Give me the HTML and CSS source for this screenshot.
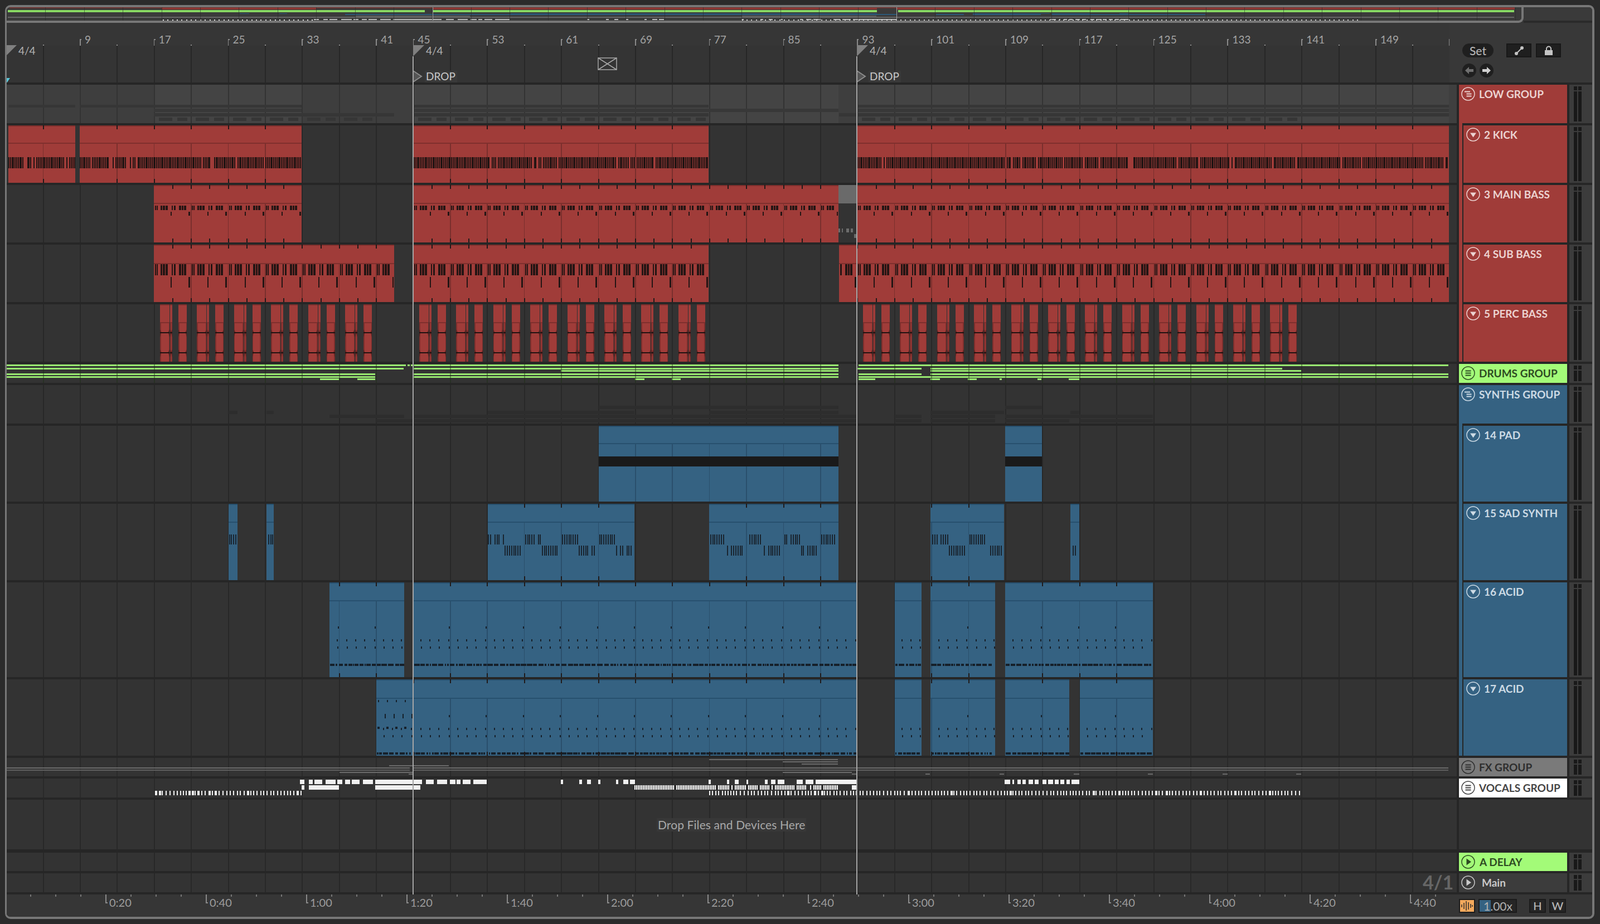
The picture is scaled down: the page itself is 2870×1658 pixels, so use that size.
FILE: index.html
```html
<!DOCTYPE html>
<html lang="en">
<head>
<meta charset="utf-8">
<title>Arrangement</title>
<link rel="stylesheet" href="styles.css">
</head>
<body>
<svg class="defs" width="0" height="0">
  <symbol id="i-fold" viewBox="0 0 25 25"><circle cx="12.5" cy="12.5" r="11.5" fill="none" stroke="currentColor" stroke-width="1.5"/><path d="M6 8.5h10M9.5 12.5h9M9.5 16.5h9" stroke="currentColor" stroke-width="1.8" fill="none"/></symbol>
  <symbol id="i-group" viewBox="0 0 25 25"><circle cx="12.5" cy="12.5" r="11.5" fill="none" stroke="currentColor" stroke-width="1.5"/><path d="M7.5 8.5h10M7.5 12.5h10M7.5 16.5h10" stroke="currentColor" stroke-width="1.8" fill="none"/></symbol>
  <symbol id="i-down" viewBox="0 0 25 25"><circle cx="12.5" cy="12.5" r="11.5" fill="none" stroke="currentColor" stroke-width="1.5"/><path d="M7 9.5h11l-5.5 8z" fill="currentColor"/></symbol>
  <symbol id="i-play" viewBox="0 0 25 25"><circle cx="12.5" cy="12.5" r="11.5" fill="none" stroke="currentColor" stroke-width="1.5"/><path d="M9.5 6.5l8.5 6-8.5 6z" fill="currentColor"/></symbol>
</svg>

<main class="frame">
  <section class="overview-bar">
    <div class="overview"><svg id="overview" class="lane" viewBox="12 13 2717 24" preserveAspectRatio="none"></svg></div>
    <div class="overview-rest"></div>
  </section>

  <section class="arr">
    <div class="topbar">
      <svg id="ruler" class="lane ruler" viewBox="12 41 2588 107"></svg>
      <div class="panel">
        <div class="panel-row">
          <div class="pill">Set</div>
          <div class="sq sq-a">
            <svg width="20" height="20" viewBox="0 0 20 20"><path d="M4 16L16 4" stroke="#c4c4c4" stroke-width="2"/><circle cx="5" cy="15" r="3" fill="#c4c4c4"/><circle cx="15" cy="5" r="3" fill="#c4c4c4"/></svg>
          </div>
          <div class="sq sq-b">
            <svg width="20" height="20" viewBox="0 0 20 20"><path d="M6 9V6.5a4 4 0 0 1 8 0V9" stroke="#c4c4c4" stroke-width="2" fill="none"/><rect x="3" y="9" width="14" height="9" fill="#c4c4c4"/></svg>
          </div>
        </div>
        <div class="panel-row nav">
          <div class="round"><svg width="17" height="17" viewBox="0 0 17 17"><path d="M1 8.5L8 2v4h8v5H8v4z" fill="#707070"/></svg></div>
          <div class="round"><svg width="17" height="17" viewBox="0 0 17 17"><path d="M16 8.5L9 2v4H1v5h8v4z" fill="#cfcfcf"/></svg></div>
        </div>
      </div>
    </div>

    <div class="tracks">
      <div class="row h69 lighter">
        <svg id="low" class="lane" viewBox="12 152 2588 69"></svg><div class="gutter"></div>
        <div class="head red"><svg class="ico"><use href="#i-fold"/></svg><span>LOW GROUP</span></div>
        <div class="meter"><i></i><i></i></div>
      </div>
      <div class="row h103">
        <svg id="kick" class="lane" viewBox="12 225 2588 103"></svg><div class="gutter"></div>
        <div class="head child red-strip"><div class="inner red"><svg class="ico"><use href="#i-down"/></svg><span>2 KICK</span></div></div>
        <div class="meter"><i></i><i></i></div>
      </div>
      <div class="row h103">
        <svg id="mainbass" class="lane" viewBox="12 332 2588 103"></svg><div class="gutter"></div>
        <div class="head child red-strip"><div class="inner red"><svg class="ico"><use href="#i-down"/></svg><span>3 MAIN BASS</span></div></div>
        <div class="meter"><i></i><i></i></div>
      </div>
      <div class="row h103">
        <svg id="subbass" class="lane" viewBox="12 439 2588 103"></svg><div class="gutter"></div>
        <div class="head child red-strip"><div class="inner red"><svg class="ico"><use href="#i-down"/></svg><span>4 SUB BASS</span></div></div>
        <div class="meter"><i></i><i></i></div>
      </div>
      <div class="row h103">
        <svg id="perc" class="lane" viewBox="12 546 2588 103"></svg><div class="gutter"></div>
        <div class="head child red-strip"><div class="inner red"><svg class="ico"><use href="#i-down"/></svg><span>5 PERC BASS</span></div></div>
        <div class="meter"><i></i><i></i></div>
      </div>
      <div class="row h34">
        <svg id="drums" class="lane" viewBox="12 653 2588 34"></svg><div class="gutter"></div>
        <div class="head green"><svg class="ico"><use href="#i-group"/></svg><span>DRUMS GROUP</span></div>
        <div class="meter"><i></i><i></i></div>
      </div>
      <div class="row h69">
        <svg id="synths" class="lane" viewBox="12 691 2588 69"></svg><div class="gutter"></div>
        <div class="head blue"><svg class="ico"><use href="#i-fold"/></svg><span>SYNTHS GROUP</span></div>
        <div class="meter"><i></i><i></i></div>
      </div>
      <div class="row h136">
        <svg id="pad" class="lane" viewBox="12 764 2588 136"></svg><div class="gutter"></div>
        <div class="head child blue-strip"><div class="inner blue"><svg class="ico"><use href="#i-down"/></svg><span>14 PAD</span></div></div>
        <div class="meter"><i></i><i></i></div>
      </div>
      <div class="row h137">
        <svg id="sad" class="lane" viewBox="12 904 2588 137"></svg><div class="gutter"></div>
        <div class="head child blue-strip"><div class="inner blue"><svg class="ico"><use href="#i-down"/></svg><span>15 SAD SYNTH</span></div></div>
        <div class="meter"><i></i><i></i></div>
      </div>
      <div class="row h170">
        <svg id="acid16" class="lane" viewBox="12 1045 2588 170"></svg><div class="gutter"></div>
        <div class="head child blue-strip"><div class="inner blue"><svg class="ico"><use href="#i-down"/></svg><span>16 ACID</span></div></div>
        <div class="meter"><i></i><i></i></div>
      </div>
      <div class="row h137">
        <svg id="acid17" class="lane" viewBox="12 1219 2588 137"></svg><div class="gutter"></div>
        <div class="head child blue-strip"><div class="inner blue"><svg class="ico"><use href="#i-down"/></svg><span>17 ACID</span></div></div>
        <div class="meter"><i></i><i></i></div>
      </div>
      <div class="row h33">
        <svg id="fx" class="lane" viewBox="12 1360 2588 33"></svg><div class="gutter"></div>
        <div class="head grey"><svg class="ico"><use href="#i-group"/></svg><span>FX GROUP</span></div>
        <div class="meter"><i></i><i></i></div>
      </div>
      <div class="row h34">
        <svg id="vocals" class="lane" viewBox="12 1397 2588 34"></svg><div class="gutter"></div>
        <div class="head white"><svg class="ico"><use href="#i-group"/></svg><span>VOCALS GROUP</span></div>
        <div class="meter"><i></i><i></i></div>
      </div>
      <div class="row h89 drop-row">
        <svg id="empty" class="lane" viewBox="12 1435 2588 89"></svg>
        <div class="drop">Drop Files and Devices Here</div>
        <div class="gutter"></div>
        <div class="head none"></div>
        <div class="meter none"></div>
      </div>
      <div class="row h33 after-drop">
        <svg id="delay" class="lane" viewBox="12 1530 2588 33"></svg><div class="gutter"></div>
        <div class="head green ret"><svg class="ico"><use href="#i-play"/></svg><span>A DELAY</span></div>
        <div class="meter"><i></i><i></i></div>
      </div>
      <div class="row h34">
        <svg id="mainlane" class="lane" viewBox="12 1567 2588 34"></svg><div class="gutter"></div>
        <div class="grid-label">4/1</div>
        <div class="head main-head"><svg class="ico"><use href="#i-play"/></svg><span>Main</span></div>
        <div class="meter"><i></i><i></i></div>
      </div>
    </div>
    <div class="loc loc-a"></div>
    <div class="loc loc-b"></div>
  </section>

  <section class="foot">
    <svg id="time" class="lane ruler" viewBox="12 1605 2588 40"></svg>
    <div class="foot-ctrl">
      <div class="orange">
        <svg width="25" height="21" viewBox="0 0 25 21"><path d="M3 8v5M7 5v11M11 2v17M15 4v13M19 7v7M22 9v3" stroke="#2a2a2a" stroke-width="1.5"/></svg>
      </div>
      <div class="rate"><b></b><span>1.00x</span></div>
      <div class="key key-h">H</div>
      <div class="key key-w">W</div>
    </div>
  </section>
</main>
<script src="app.js"></script>
</body>
</html>
```

FILE: styles.css
```css
* { box-sizing: border-box; }
html, body { margin: 0; padding: 0; }
body {
  width: 2870px;
  height: 1658px;
  overflow: hidden;
  background: #2b2b2b;
  padding: 9px 10px 9px 9px;
  font-family: "Lato", "Liberation Sans", sans-serif;
}
.defs { position: absolute; }
.frame {
  width: 2851px;
  height: 1640px;
  border: solid #777;
  border-width: 4px 4px 4px 3px;
  border-radius: 10px;
  background: #363636;
  display: flex;
  flex-direction: column;
  overflow: hidden;
}
.lane { display: block; flex: none; width: 2588px; height: 100%; shape-rendering: crispEdges; }
.lane text { shape-rendering: auto; font-family: "Lato", "Liberation Sans", sans-serif; }

.overview-bar { display: flex; height: 28px; flex: none; }
.overview {
  width: 2721px;
  height: 28px;
  border: solid #777;
  border-width: 0 4px 4px 0;
  border-radius: 0 0 9px 0;
  background: #3a3a3a;
  overflow: hidden;
}
.overview .lane { width: 2717px; }
.overview-rest { flex: 1; background: #3a3a3a; border-bottom: 4px solid #2a2a2a; }

.arr { position: relative; flex: none; }
.topbar { display: flex; height: 107px; background: #383838; }
.ruler { background: #363636; }
.panel { flex: 1; padding: 37px 0 0 23px; }
.panel-row { display: flex; align-items: center; }
.nav { margin-top: 11px; gap: 6px; }
.pill {
  width: 56px; height: 25px; border-radius: 13px; background: #1f1f1f;
  color: #b6b6b6; font-size: 21px; font-weight: 500; line-height: 25px; text-align: center;
}
.sq {
  width: 45px; height: 25px; background: #1f1f1f; border: 2px solid #181818;
  display: flex; align-items: center; justify-content: center;
}
.sq-a { margin-left: 23px; }
.sq-b { margin-left: 8px; }
.round {
  width: 25px; height: 25px; border-radius: 50%; background: #1f1f1f;
  display: flex; align-items: center; justify-content: center;
}

.tracks {
  border-top: 4px solid #262626;
  background: #262626;
  display: flex;
  flex-direction: column;
  gap: 4px;
  padding-bottom: 4px;
}
.row { display: flex; position: relative; flex: none; }
.h33 { height: 33px; }
.h34 { height: 34px; }
.h69 { height: 69px; }
.h89 { height: 89px; }
.h103 { height: 103px; }
.h136 { height: 136px; }
.h137 { height: 137px; }
.h170 { height: 170px; }
.after-drop { margin-top: 2px; }
.gutter { width: 13px; margin-right: 4px; background: #333; flex: none; }
.lighter .gutter { background: #3f3f3f; }

.head {
  width: 194px; margin-right: 4px; flex: none;
  display: flex; align-items: flex-start; gap: 7px;
  padding: 4px 0 0 4px;
  font-size: 19px; font-weight: 700; line-height: 25px; white-space: nowrap;
  position: relative;
}
.head.child { display: block; padding: 0 0 0 8px; }
.head.child::before { content: ""; position: absolute; left: 0; top: -4px; bottom: 0; width: 6px; }
.red-strip::before { background: #a03c39; }
.blue-strip::before { background: #356282; }
.inner { height: 100%; display: flex; align-items: flex-start; gap: 7px; padding: 4px 0 0 5px; }
.ico { width: 25px; height: 25px; flex: none; }
.red { background: #a03c39; color: #ecd3d1; }
.blue { background: #356282; color: #cddbe5; }
.green { background: #a3fb78; color: #2d4a22; }
.grey { background: #7a7a7a; color: #2e2e2e; }
.white { background: #fff; color: #454545; }
.main-head { background: #3c3c3c; color: #c9c9c9; }
.ret span { margin-left: 1px; }
.main-head span { margin-left: 5px; }
.head.none { background: #333; margin-right: 0; width: 198px; }

.meter {
  width: 41px; flex: none; background: #3c3c3c;
  display: flex; gap: 2px; padding: 3px 0 3px 8px;
}
.meter.none { background: #333; }
.meter i {
  display: block; width: 6px; height: 100%;
  background: linear-gradient(#191919 0, #191919 7px, #3c3c3c 7px, #3c3c3c 9px, #191919 9px);
}

.loc { position: absolute; top: 60px; bottom: 0; width: 2px; background: #a6a6a6; }
.loc-a { left: 728px; }
.loc-b { left: 1524px; }

.drop-row .drop {
  position: absolute; left: 1166px; top: 33px; padding: 0 2px;
  color: #a8a8a8; font-size: 21px; letter-spacing: 0.1px; line-height: 24px; background: #383838;
}
.grid-label {
  position: absolute; left: 2540px; top: 0;
  color: #666; font-size: 34px; font-weight: 700; line-height: 32px;
}

.foot { display: flex; flex: 1; background: #363636; }
.foot .lane { height: 40px; }
.foot-ctrl { flex: 1; display: flex; align-items: flex-start; padding: 8px 0 0 17px; }
.orange {
  width: 29px; height: 25px; background: #f4a95c; border: 2px solid #1c1c1c;
  display: flex; align-items: center; justify-content: center;
}
.rate {
  width: 69px; height: 25px; margin-left: 6px; background: #262626; border: 2px solid #1c1c1c;
  position: relative; color: #b0b0b0; font-size: 21px; line-height: 21px; padding-left: 7px;
}
.rate b { position: absolute; left: 0; top: 0; bottom: 0; width: 20px; background: #356282; }
.rate span { position: relative; }
.key {
  width: 30px; height: 25px; background: #262626; border: 2px solid #1c1c1c;
  color: #b8b8b8; font-size: 20px; line-height: 21px; text-align: center; font-weight: 500;
}
.key-h { margin-left: 22px; }
.key-w { margin-left: 6px; }
```

FILE: app.js
```js
(function () {
  var X0 = 10.2, K = 16.6, P = 66.4;
  var GRID = [];
  for (var b = 1; b <= 157; b += 4) GRID.push(X0 + (b - 1) * K);

  function rnd(seed) {
    var s = seed;
    return function () {
      s = (s * 1664525 + 1013904223) >>> 0;
      return ((s >>> 8) & 65535) / 65536;
    };
  }
  function r(x, y, w, h, c, extra) {
    return '<rect x="' + x.toFixed(1) + '" y="' + y + '" width="' + w.toFixed(1) + '" height="' + h + '" fill="' + c + '"' + (extra || '') + '/>';
  }
  function span(xa, xb, y, h, c) { return r(xa, y, xb - xa, h, c); }
  function gridLines(top, h, c) {
    return GRID.map(function (g) { return r(g, top, 2, h, c || '#282828'); }).join('');
  }
  function put(id, body, gridC) {
    var el = document.getElementById(id);
    var vb = el.viewBox.baseVal;
    el.innerHTML = r(12, vb.y, 2588, vb.height, id === 'low' ? '#3e3e3e' : '#333') + gridLines(vb.y, vb.height, gridC) + body;
  }
  var RED = { bg: '#a03c39', line: '#7a2f2d', edge: '#7f2f2d' };
  var BLUE = { bg: '#356282', line: '#2a4f6c', edge: '#27506e' };

  function clip(xa, xb, top, bot, title, sch, tick, inner) {
    var s = r(xa, top, xb - xa, bot - top, sch.bg);
    s += r(xa, top, xb - xa, 2, sch.edge);
    s += r(xa, title, xb - xa, 2, sch.edge);
    GRID.forEach(function (g) {
      if (g > xa + 1 && g < xb - 1) s += r(g, title + 2, 1.5, bot - title - 2, sch.line);
    });
    if (inner) s += inner;
    if (tick) {
      for (var x = firstGrid(xa, tick); x < xb - 1; x += tick) {
        if (x > xa + 1) {
          s += r(x, top, 2, 7, '#201a1a');
          s += r(x, bot - 7, 2, 7, '#201a1a');
        }
      }
    }
    return s;
  }
  function firstGrid(x, step) { return X0 + Math.ceil((x - X0) / step) * step; }

  function perGrid(xa, xb, offs, y, h, c) {
    var s = '';
    var start = X0 + Math.floor((xa - X0) / P) * P;
    for (var g = start; g < xb; g += P) {
      offs.forEach(function (o) {
        var x = g + o[0];
        if (x >= xa + 1 && x + o[1] <= xb) s += r(x, y, o[1], h, c);
      });
    }
    return s;
  }

  /* ---------- Low group ---------- */
  var kickR = [[15, 135], [143, 541], [742, 1271], [1537, 2599]];
  var mainR = [[276, 541], [741, 1504], [1537, 2599]];
  var subR = [[276, 707], [741, 1271], [1505, 2599]];
  var percR = [[276, 674, 6], [741, 1271, 8], [1537, 2334, 12]];

  var low = '';
  mainR.forEach(function (a) { low += span(a[0], a[1], 152, 69, '#444'); });
  low = low + gridLines(152, 69, '#333');
  kickR.forEach(function (a) { low += span(a[0], a[1], 188, 5, '#363636'); });
  mainR.forEach(function (a) { low += span(a[0], a[1], 195, 6, '#383838'); });
  subR.forEach(function (a) { low += span(a[0], a[1], 203, 6, '#363636'); });
  percR.forEach(function (a) {
    for (var i = 0; i < a[2]; i++) {
      var g = a[0] + i * P;
      low += r(g + 9, 211, 24, 6, '#363636') + r(g + 42, 211, 18, 6, '#363636');
    }
  });
  put('low', low, '#2c2c2c');

  /* ---------- Kick ---------- */
  var rk = rnd(7), kick = '';
  kickR.forEach(function (a) {
    var n = '';
    for (var x = a[0]; x < a[1] - 2; x += 2.8) {
      if (rk() > 0.06) n += r(x, 282, 2, 20, '#241514');
    }
    kick += clip(a[0], a[1], 225, 328, 256, RED, P, n);
  });
  put('kick', kick);

  /* ---------- Basses ---------- */
  var bassA = [[2, 2], [5, 2], [12, 3], [16, 4], [21, 4], [32, 2], [36, 3], [45, 4], [50, 3], [54, 4]];
  var bassB = [[30, 2], [62, 3]];
  var mb = '';
  mainR.forEach(function (a) {
    mb += clip(a[0], a[1], 332, 435, 364, RED, P / 2,
      perGrid(a[0], a[1], bassA, 369, 8, '#241514') + perGrid(a[0], a[1], bassB, 380, 7, '#241514'));
  });
  mb += r(1504, 332, 32, 33, '#6a6a6a');
  [[1504, 3], [1510, 2], [1518, 5], [1526, 4]].forEach(function (o) { mb += r(o[0], 410, o[1], 7, '#6c6c6c'); });
  mb += r(1532, 420, 4, 7, '#6c6c6c');
  put('mainbass', mb);

  var sb = '';
  subR.forEach(function (a) {
    sb += clip(a[0], a[1], 439, 542, 472, RED, P / 2,
      perGrid(a[0], a[1], bassA, 474, 20, '#241514') + perGrid(a[0], a[1], bassB, 497, 19, '#241514'));
  });
  put('subbass', sb);

  /* ---------- Perc ---------- */
  function percChunk(xa, xb) {
    var s = clip(xa, xb, 546, 649, 578, RED, 0, '');
    s += r(xa, 578, 1.5, 71, RED.edge) + r(xb - 1.5, 578, 1.5, 71, RED.edge);
    [596, 632].forEach(function (y) {
      s += '<path d="M' + xa + ' ' + (y - 5) + 'l2.5 5 -2.5 9zM' + xb + ' ' + (y - 5) + 'l-2.5 5 2.5 9z" fill="#5e2321" shape-rendering="auto"/>';
      s += r(xa, y, xb - xa, 2, '#1f1211');
    });
    return s;
  }
  var pc = '';
  percR.forEach(function (a) {
    for (var i = 0; i < a[2]; i++) {
      var g = a[0] + i * P;
      pc += percChunk(g + 11, g + 28) + percChunk(g + 29, g + 33) + percChunk(g + 44, g + 59);
    }
  });
  put('perc', pc);

  /* ---------- Drums group ---------- */
  var G = '#98e870';
  var dl = [
    [654, [[12, 728], [731, 735], [737, 1504], [1540, 2598]]],
    [660, [[12, 724], [741, 1504], [1537, 1653], [1669, 2300]]],
    [664, [[1006, 1504], [1669, 2334]]],
    [670, [[12, 673], [741, 1504], [1540, 1653], [1669, 2598]]],
    [675, [[12, 673], [741, 1504], [1540, 2598]]],
    [679, [[574, 608], [641, 673], [1139, 1156], [1205, 1221], [1540, 1570], [1669, 1686], [1736, 1752], [1793, 1797], [1861, 1868], [1917, 1936]]]
  ];
  var dr = '';
  dl.forEach(function (l) {
    l[1].forEach(function (a) { dr += span(a[0], a[1], l[0], 3, G); });
  });
  dr += gridLines(653, 34, 'rgba(40,60,30,.45)');
  put('drums', dr);

  /* ---------- Synths group ---------- */
  var padR = [[1074, 1504], [1803, 1869]];
  var sadR = [[410, 426], [478, 491], [875, 1138], [1272, 1504], [1669, 1801], [1920, 1936]];
  var a16R = [[591, 725], [742, 1537], [1605, 1653], [1669, 1785], [1803, 2068]];
  var a17R = [[675, 1537], [1605, 1653], [1669, 1785], [1803, 1918], [1937, 2068]];
  var sy = '';
  [[padR, 728], [sadR, 737], [a16R, 744], [a17R, 752]].forEach(function (p) {
    p[0].forEach(function (a) { sy += span(a[0], a[1], p[1], 6, '#2d2d2d'); });
  });
  put('synths', sy);

  /* ---------- Pad ---------- */
  var pd = '';
  padR.forEach(function (a) {
    pd += clip(a[0], a[1], 764, 900, 795, BLUE, 0, r(a[0], 819, a[1] - a[0], 18, '#1a1a1a'));
  });
  put('pad', pd);

  /* ---------- Sad synth ---------- */
  var rs = rnd(21);
  function cluster(off) {
    var out = [], x = off;
    for (var i = 0; i < 8; i++) {
      if (rs() > 0.08) out.push([x, 2]);
      x += 3.8;
    }
    return out;
  }
  var sd = '';
  sadR.forEach(function (a) {
    var n = '';
    var start = X0 + Math.floor((a[0] - X0) / P) * P;
    for (var g = start; g < a[1]; g += P) {
      cluster(2).forEach(function (o) {
        var x = g + o[0];
        if (x > a[0] && x + 2 < a[1]) n += r(x, 959, o[1], 18, '#1a2530');
      });
      cluster(32).forEach(function (o) {
        var x = g + o[0];
        if (x > a[0] && x + 2 < a[1]) n += r(x, 979, o[1], 18, '#1a2530');
      });
    }
    sd += clip(a[0], a[1], 904, 1041, 936, BLUE, P, n);
  });
  put('sad', sd);

  /* ---------- Acid ---------- */
  var NOTE = '#16202a';
  var ra = rnd(33);
  function dashBand(xa, xb, y, h) {
    var s = '', x = xa + 1;
    while (x < xb - 3) {
      var w = 2 + Math.floor(ra() * 9);
      if (x + w > xb) w = xb - x;
      s += r(x, y, w, h, NOTE);
      x += w + 1 + Math.floor(ra() * 3);
    }
    return s;
  }
  var dots = [[13, 2], [29, 2], [45, 2], [63, 2]];
  var dots2 = [[14, 2], [30, 2], [46, 2], [64, 2]];
  var a16 = '';
  a16R.forEach(function (q) {
    var n = perGrid(q[0], q[1], [[-2 + P, 2]], 1124, 4, NOTE) +
      perGrid(q[0], q[1], dots, 1147, 4, NOTE) +
      perGrid(q[0], q[1], dots2, 1160, 4, NOTE) +
      dashBand(q[0], q[1], 1191, 4);
    a16 += clip(q[0], q[1], 1045, 1215, 1077, BLUE, P, n);
  });
  put('acid16', a16);

  var a17 = '';
  a17R.forEach(function (q) {
    var n = perGrid(q[0], q[1], [[-2 + P, 2]], 1283, 4, NOTE) +
      perGrid(q[0], q[1], dots, 1306, 4, NOTE) +
      perGrid(q[0], q[1], dots2, 1319, 4, NOTE) +
      dashBand(q[0], q[1], 1350, 4);
    if (q[0] === 675) {
      [678, 694, 710, 726].forEach(function (x) {
        n += r(x, 1256, 2, 4, NOTE);
        n += r(x + 12, 1281, 2, 8, NOTE);
        n += r(x - 1, 1304, 4, 4, NOTE);
      });
    }
    a17 += clip(q[0], q[1], 1219, 1356, 1252, BLUE, P, n);
  });
  put('acid17', a17);

  /* ---------- FX ---------- */
  var F = '#6a6a6a';
  var fx = span(12, 735, 1377, 2, F) + span(12, 735, 1381, 2, '#5e5e5e') +
    span(742, 2598, 1377, 2, F) + span(742, 2598, 1381, 2, '#5e5e5e');
  [[698, 805, 1373], [1272, 1503, 1362], [1404, 1503, 1366], [1438, 1503, 1370], [609, 741, 1385], [1404, 1528, 1385],
    [733, 741, 1388], [1528, 1537, 1388], [1660, 1668, 1388], [1793, 1801, 1388], [1926, 1936, 1388], [2059, 2068, 1388], [2193, 2202, 1388], [2325, 2334, 1388]
  ].forEach(function (a) { fx += span(a[0], a[1], a[2], 2, F); });
  put('fx', fx, '#2a2a2a');

  /* ---------- Vocals ---------- */
  var W = '#f0f0f0';
  var rowA = [[54, 66], [77, 87], [91, 111], [120, 146], [150, 162], [170, 183], [187, 207], [215, 241], [247, 366], [376, 396], [405, 430], [437, 451], [455, 465], [470, 490], [497, 532], [721, 727], [768, 775], [788, 798], [817, 822], [862, 868], [881, 893], [897, 910], [1099, 1105], [1146, 1152], [1166, 1176], [1195, 1200], [1243, 1249], [1258, 1270], [1275, 1293], [1324, 1340], [1346, 1366], [1372, 1478]];
  var rowAr = [[426, 440], [447, 450], [459, 467], [472, 480], [487, 498], [503, 513], [522, 533], [537, 550], [553, 563], [568, 577], [583, 592], [596, 616]];
  var rowB = [[58, 66], [77, 154], [247, 362], [1465, 1478]];
  var vo = '';
  rowA.forEach(function (a) { vo += span(500 + a[0] / 1.425, 500 + a[1] / 1.425, 1399, 8, W); });
  rowAr.forEach(function (a) { vo += span(1500 + a[0] / 1.4126, 1500 + a[1] / 1.4126, 1399, 8, W); });
  rowB.forEach(function (a) { vo += span(500 + a[0] / 1.425, 500 + a[1] / 1.425, 1409, 8, W); });
  var rv = rnd(55);
  for (var x = 1138; x < 1503; x += 3) { if (rv() > 0.14) vo += r(x, 1409, 2, 8, '#fff'); }
  [[278, 541], [1272, 2332]].forEach(function (a) {
    for (var x2 = a[0]; x2 < a[1]; x2 += 5 + Math.floor(rv() * 3)) vo += r(x2, 1419, rv() > 0.9 ? 4 : 2, 8, W);
  });
  put('vocals', vo, '#2a2a2a');

  put('empty', '', '#282828');
  put('delay', '', '#282828');
  put('mainlane', '', '#282828');

  /* ---------- Beat ruler ---------- */
  function txt(x, y, s, c, size) {
    return '<text x="' + x + '" y="' + y + '" fill="' + c + '" font-size="' + (size || 19) + '">' + s + '</text>';
  }
  var ru = r(12, 82, 2588, 66, '#343434') + gridLines(82, 66, '#272727');
  for (var bar = 1; bar <= 157; bar += 4) {
    var gx = X0 + (bar - 1) * K;
    var lab = (bar === 9 || (bar >= 17 && bar <= 41 && (bar - 1) % 8 === 0) || bar === 45 || (bar > 45 && (bar - 45) % 8 === 0 && bar < 157));
    if (lab) {
      ru += r(gx, 70, 1.5, 12, '#8a8a8a') + r(gx, 70, 3, 1.5, '#8a8a8a');
      ru += txt(gx + 9, 78, bar, '#a4a4a4');
    } else if (gx < 2590 && bar > 1) {
      ru += r(gx, 80, 2, 2, '#8a8a8a');
    }
  }
  ru += r(2599, 70, 2, 12, '#888');
  [10, 741, 1537].forEach(function (x) {
    ru += '<path d="M' + Math.max(x, 12) + ' 81h' + (x < 12 ? 18 : 20) + 'l-20 20z" fill="#808080" shape-rendering="auto"/>';
    ru += txt((x < 12 ? 33 : x + 23), 98, '4/4', '#b2b2b2');
  });
  [741, 1537].forEach(function (x) {
    ru += '<path d="M' + x + ' 127l15 10 -15 10z" fill="#555" stroke="#8c8c8c" stroke-width="2" shape-rendering="auto"/>';
    ru += r(x + 21, 127, 58, 21, '#393939');
    ru += txt(x + 23, 144, 'DROP', '#c8c8c8');
  });
  ru += '<path d="M12 140h6l-6 9z" fill="#58c6d8" shape-rendering="auto"/>';
  ru += '<g shape-rendering="auto" stroke="#a8a8a8" stroke-width="1.5" fill="none"><rect x="1073" y="104" width="33" height="21"/><path d="M1073 104l33 21M1106 104l-33 21"/></g>';
  document.getElementById('ruler').innerHTML = ru;

  /* ---------- Time ruler ---------- */
  var ti = '';
  for (var k = 1; k <= 14; k++) {
    var tx = 9 + k * 180;
    var sec = k * 20;
    var m = Math.floor(sec / 60), ss = sec % 60;
    var label = m + ':' + (ss < 10 ? '0' : '') + ss;
    ti += r(tx, 1605, 1.5, 15, '#8a8a8a') + r(tx, 1619, 4, 1.5, '#8a8a8a');
    ti += txt(tx + 7, 1627, label, '#9c9c9c', 20);
    [45, 90, 135].forEach(function (d) { ti += r(tx + d, 1605, 1.5, 4, '#777'); });
  }
  [54, 99, 144].forEach(function (d) { ti += r(d, 1605, 1.5, 4, '#777'); });
  document.getElementById('time').innerHTML = ti;

  /* ---------- Overview ---------- */
  function ox(x) { return 12 + (x - 10.2) * 1.045; }
  function ovs(list, y, h, c) {
    return list.map(function (a) { return r(ox(a[0]), y, ox(a[1]) - ox(a[0]), h, c); }).join('');
  }
  var ov = '';
  ov += ovs([[15, 2599]], 13, 2, '#6a3230');
  ov += ovs(mainR, 14, 3, '#8d3734');
  ov += ovs([[12, 728], [741, 1504], [1540, 2598]], 18, 4, '#88d863');
  ov += ovs(padR, 24, 1, '#2c5877') + ovs(sadR, 24, 1, '#2c5877') + ovs(a16R, 25, 2, '#2c5877') + ovs(a17R, 25, 2, '#2c5877');
  ov += ovs([[12, 2598]], 30, 2, '#666');
  ov += ovs([[609, 805], [1272, 1503]], 28, 2, '#5a5a5a');
  for (var v = 278; v < 541; v += 8) ov += r(ox(v), 35, 2, 2, '#ddd');
  rowA.forEach(function (a) { var xa = 500 + a[0] / 1.425, xb = 500 + a[1] / 1.425; ov += r(ox(xa), 34, ox(xb) - ox(xa), 2, '#bbb'); });
  rowAr.forEach(function (a) { var xa = 1500 + a[0] / 1.4126, xb = 1500 + a[1] / 1.4126; ov += r(ox(xa), 34, ox(xb) - ox(xa), 2, '#bbb'); });
  for (v = 1272; v < 2332; v += 8) ov += r(ox(v), 35, 2, 2, '#ccc');
  for (var c = 0; c <= 39; c++) ov += r(ox(X0 + c * P), 13, 1, 24, 'rgba(40,40,40,.55)');
  [741, 1537].forEach(function (x) { ov += r(ox(x), 13, 1.5, 24, '#a0a0a0'); });
  document.getElementById('overview').innerHTML = ov;
})();
```
